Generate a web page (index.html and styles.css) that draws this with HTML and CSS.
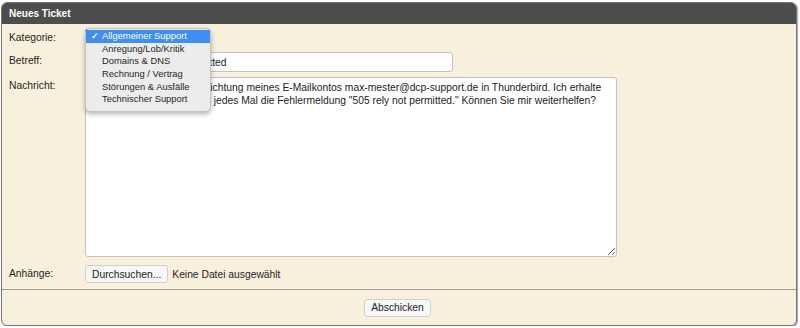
FILE: index.html
```html
<!DOCTYPE html>
<html lang="de">
<head>
  <meta charset="UTF-8" />
  <meta name="viewport" content="width=device-width, initial-scale=1.0"/>
  <title>Neues Ticket</title>
  <link rel="stylesheet" href="styles.css">
</head>
<body>
  <div class="ticket-box">
    <div class="ticket-head">Neues Ticket</div>

    <div class="ticket-body">
      <label class="feld-label">Kategorie:</label>
      <div class="kategorie-feld">
        <select id="kategorie" class="kategorie-select">
          <option>Allgemeiner Support</option>
        </select>
        <ul class="dropdown">
          <li class="aktiv"><span class="haken">✓</span>Allgemeiner Support</li>
          <li>Anregung/Lob/Kritik</li>
          <li>Domains &amp; DNS</li>
          <li>Rechnung / Vertrag</li>
          <li>Störungen &amp; Ausfälle</li>
          <li>Technischer Support</li>
        </ul>
      </div>

      <label class="feld-label">Betreff:</label>
      <input type="text" id="betreff" class="betreff" value="Fehler: 505 rely not permitted" />

      <label class="feld-label">Nachricht:</label>
      <textarea id="nachricht" class="nachricht" wrap="off">Ich habe Pech mit der Einrichtung meines E-Mailkontos max-mester@dcp-support.de in Thunderbird. Ich erhalte
beim Senden meiner Mails jedes Mal die Fehlermeldung "505 rely not permitted." Können Sie mir weiterhelfen?</textarea>

      <label class="feld-label anhang-label">Anhänge:</label>
      <div class="datei-feld">
        <button type="button" class="knopf">Durchsuchen...</button>
        <span class="datei-name">Keine Datei ausgewählt</span>
      </div>
    </div>

    <div class="ticket-foot">
      <button type="button" class="knopf">Abschicken</button>
    </div>
  </div>
</body>
</html>
```

FILE: styles.css
```css
body {
  font-family: 'Liberation Sans', Arial, sans-serif;
  font-size: 10.3px;
  color: #1e1e1e;
  background-color: #ffffff;
  margin: 0;
  padding: 2px 3px 0 1px;
}

.ticket-box {
  height: 324px;
  box-sizing: border-box;
  border: 1px solid #777777;
  border-radius: 6px;
  background-color: #f8f0dc;
  box-shadow: 1px 1px 1px rgba(0, 0, 0, 0.35);
  overflow: hidden;
  display: flex;
  flex-direction: column;
}

.ticket-head {
  background-color: #4d4d4d;
  color: #ffffff;
  font-weight: bold;
  font-size: 10px;
  height: 21px;
  line-height: 21px;
  padding-left: 7px;
}

.ticket-body {
  display: grid;
  grid-template-columns: 76px auto;
  grid-template-rows: 18px 20px 180px 21px;
  align-items: start;
  row-gap: 5px;
  padding: 5px 7px 6px 7px;
}

.feld-label {
  line-height: 18px;
}

.anhang-label {
  align-self: end;
}

.kategorie-feld {
  position: relative;
  height: 18px;
}

.kategorie-select {
  font-family: inherit;
  font-size: 10px;
  height: 18px;
}

.dropdown {
  position: absolute;
  left: 0;
  top: -1px;
  width: 126px;
  margin: 0;
  padding: 1px 0 5px 0;
  list-style: none;
  background-color: #ececec;
  border: 1px solid #c4c4c4;
  border-radius: 5px;
  box-shadow: 0 2px 5px rgba(0, 0, 0, 0.3);
  box-sizing: border-box;
  font-size: 9.4px;
  color: #262626;
  z-index: 2;
}

.dropdown li {
  height: 12.7px;
  line-height: 12.7px;
  padding-left: 16px;
  position: relative;
}

.dropdown li.aktiv {
  background-color: #3d8ef7;
  color: #ffffff;
}

.haken {
  position: absolute;
  left: 5px;
  font-size: 8.5px;
  font-weight: bold;
}

.betreff {
  width: 368px;
  height: 20px;
  box-sizing: border-box;
  border: 1px solid #c2c2c2;
  border-radius: 3px;
  padding: 0 4px 0 6px;
  margin: 0;
  font-family: inherit;
  font-size: 10.3px;
  color: #222222;
  background-color: #ffffff;
}

.nachricht {
  width: 532px;
  height: 180px;
  box-sizing: border-box;
  border: 1px solid #c2c2c2;
  border-radius: 3px;
  padding: 3px 2px 3px 3px;
  font-family: inherit;
  font-size: 10.3px;
  line-height: 13px;
  color: #222222;
  background-color: #ffffff;
  resize: both;
  overflow: hidden;
  margin: 0;
}

.datei-feld {
  display: flex;
  align-items: center;
  gap: 4px;
  align-self: end;
}

.knopf {
  font-family: inherit;
  font-size: 10.3px;
  color: #222222;
  height: 18px;
  padding: 0 6px;
  margin: 0;
  background-color: #f7f7f7;
  border: 1px solid #cfcfcf;
  border-radius: 3px;
}

.datei-name {
  color: #1e1e1e;
}

.ticket-foot {
  border-top: 1px solid #9a9a9a;
  flex: 1;
  display: flex;
  justify-content: center;
  align-items: center;
  padding-right: 3px;
}
```
